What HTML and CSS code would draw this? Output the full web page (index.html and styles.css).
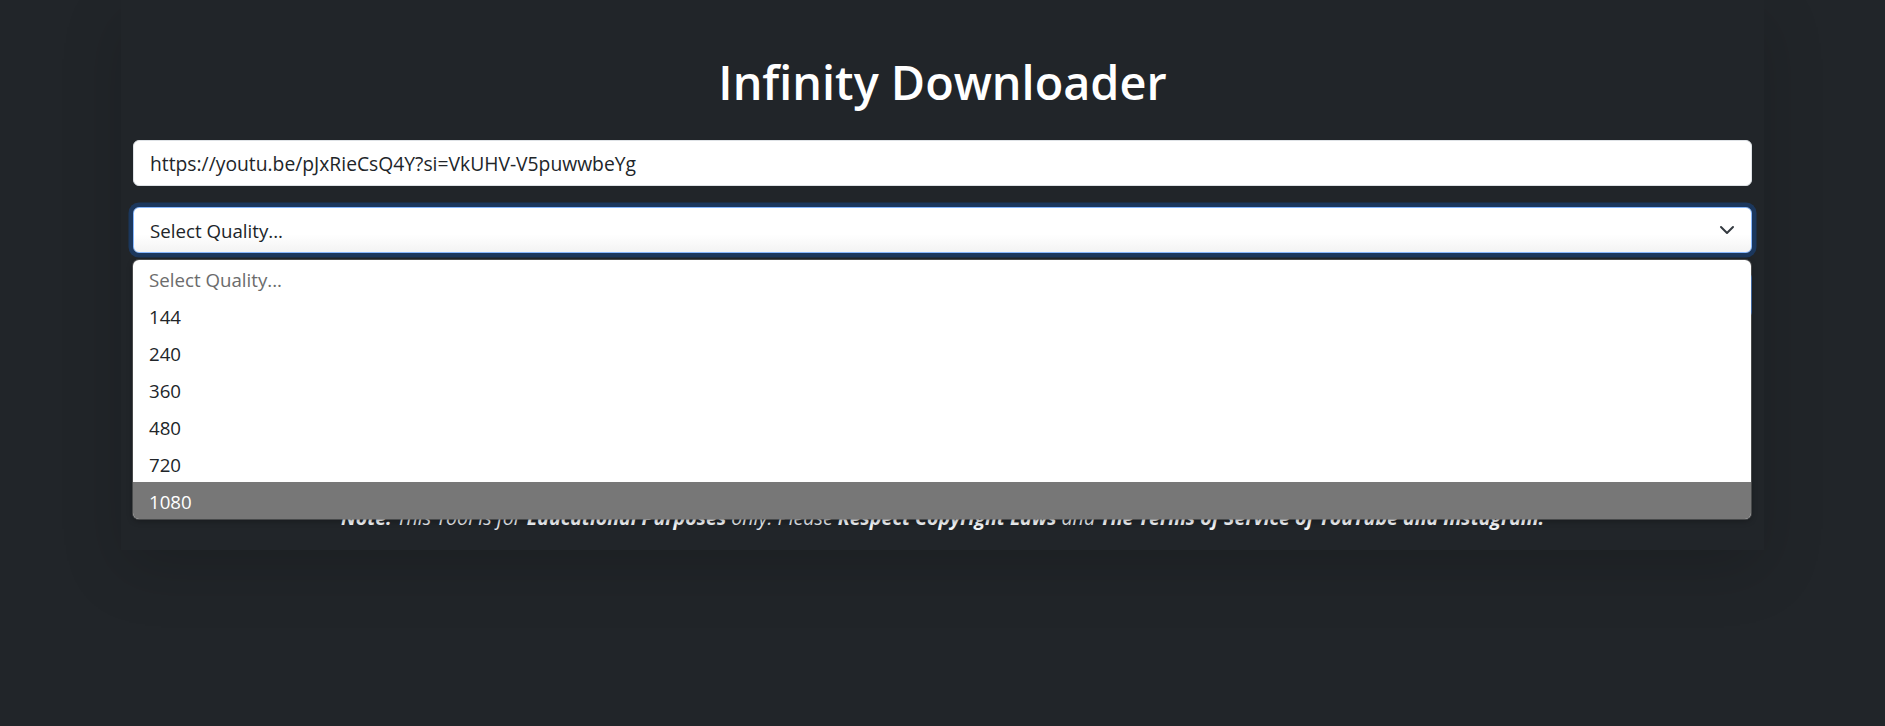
FILE: index.html
```html
<!DOCTYPE html>
<html lang="en">
<head>
<meta charset="utf-8">
<title>Infinity Downloader</title>
<link rel="stylesheet" href="styles.css">
</head>
<body>
<main class="card">
  <h1 class="title">Infinity Downloader</h1>
  <form class="form">
    <div class="field url-field">https://youtu.be/pJxRieCsQ4Y?si=VkUHV-V5puwwbeYg</div>
    <div class="select-wrap">
      <div class="field select-field">
        <span>Select Quality...</span>
        <svg class="chevron" width="16" height="16" viewBox="0 0 16 16"><path d="M2 5l6 6 6-6" fill="none" stroke="#343a40" stroke-width="2" stroke-linecap="round" stroke-linejoin="round"/></svg>
      </div>
      <ul class="dropdown">
        <li class="opt placeholder">Select Quality...</li>
        <li class="opt">144</li>
        <li class="opt">240</li>
        <li class="opt">360</li>
        <li class="opt">480</li>
        <li class="opt">720</li>
        <li class="opt active">1080</li>
      </ul>
    </div>
    <div class="btn">Download</div>
  </form>
  <p class="note"><b>Note:</b> This Tool is for <b>Educational Purposes</b> only. Please <b>Respect Copyright Laws</b> and <b>The Terms of Service of YouTube and Instagram.</b></p>
</main>
</body>
</html>
```
FILE: styles.css
```css
* { box-sizing: border-box; }
html, body { margin: 0; padding: 0; }
body {
  background: #212529;
  height: 726px;
  overflow: hidden;
  font-family: "Open Sans", "Noto Sans", sans-serif;
  color: #dee2e6;
}
.card {
  width: 1643px;
  margin: 0 auto;
  padding: 54px 12px 18px;
  box-shadow: 0 19px 58px rgba(0, 0, 0, 0.15);
}
.title {
  margin: 0 0 30px;
  text-align: center;
  font-size: 46.8px;
  font-weight: 600;
  line-height: 56px;
  color: #ffffff;
}
.form {
  display: flex;
  flex-direction: column;
}
.field {
  height: 46px;
  background: #ffffff;
  border: 1px solid #dee2e6;
  border-radius: 6px;
  padding: 0 16px;
  font-size: 18.7px;
  color: #212529;
  display: flex;
  align-items: center;
}
.url-field { font-size: 19.3px; }
.select-wrap {
  position: relative;
  margin-top: 21px;
}
.select-field {
  justify-content: space-between;
  border-color: #86b7fe;
  background: linear-gradient(#ffffff 60%, #f3f3f3);
  box-shadow: 0 0 0 4.5px rgba(13, 110, 253, 0.25);
}
.chevron { display: block; }
.dropdown {
  position: absolute;
  z-index: 5;
  top: 53px;
  left: 0;
  right: 1px;
  margin: 0;
  padding: 0;
  list-style: none;
  background: #ffffff;
  border-radius: 6px;
  overflow: hidden;
  box-shadow: 0 0 0 1px rgba(110, 110, 110, 0.55), 0 2px 6px rgba(0, 0, 0, 0.3);
}
.opt {
  height: 37px;
  padding: 2px 16px 0;
  display: flex;
  align-items: center;
  font-size: 18.7px;
  color: #212529;
}
.opt.placeholder { color: #6c6c6c; }
.opt.active { background: #777777; color: #ffffff; }
.btn {
  margin-top: 19px;
  height: 46px;
  border-radius: 6px;
  background: #0d6efd;
  color: #ffffff;
  display: flex;
  align-items: center;
  justify-content: center;
  font-size: 19px;
}
.note {
  margin: 185px 0 0;
  text-align: center;
  font-size: 19.6px;
  line-height: 1.5;
  font-style: italic;
  color: #e3e6e9;
}
.note b { font-weight: 700; color: #f1f3f5; }
```
